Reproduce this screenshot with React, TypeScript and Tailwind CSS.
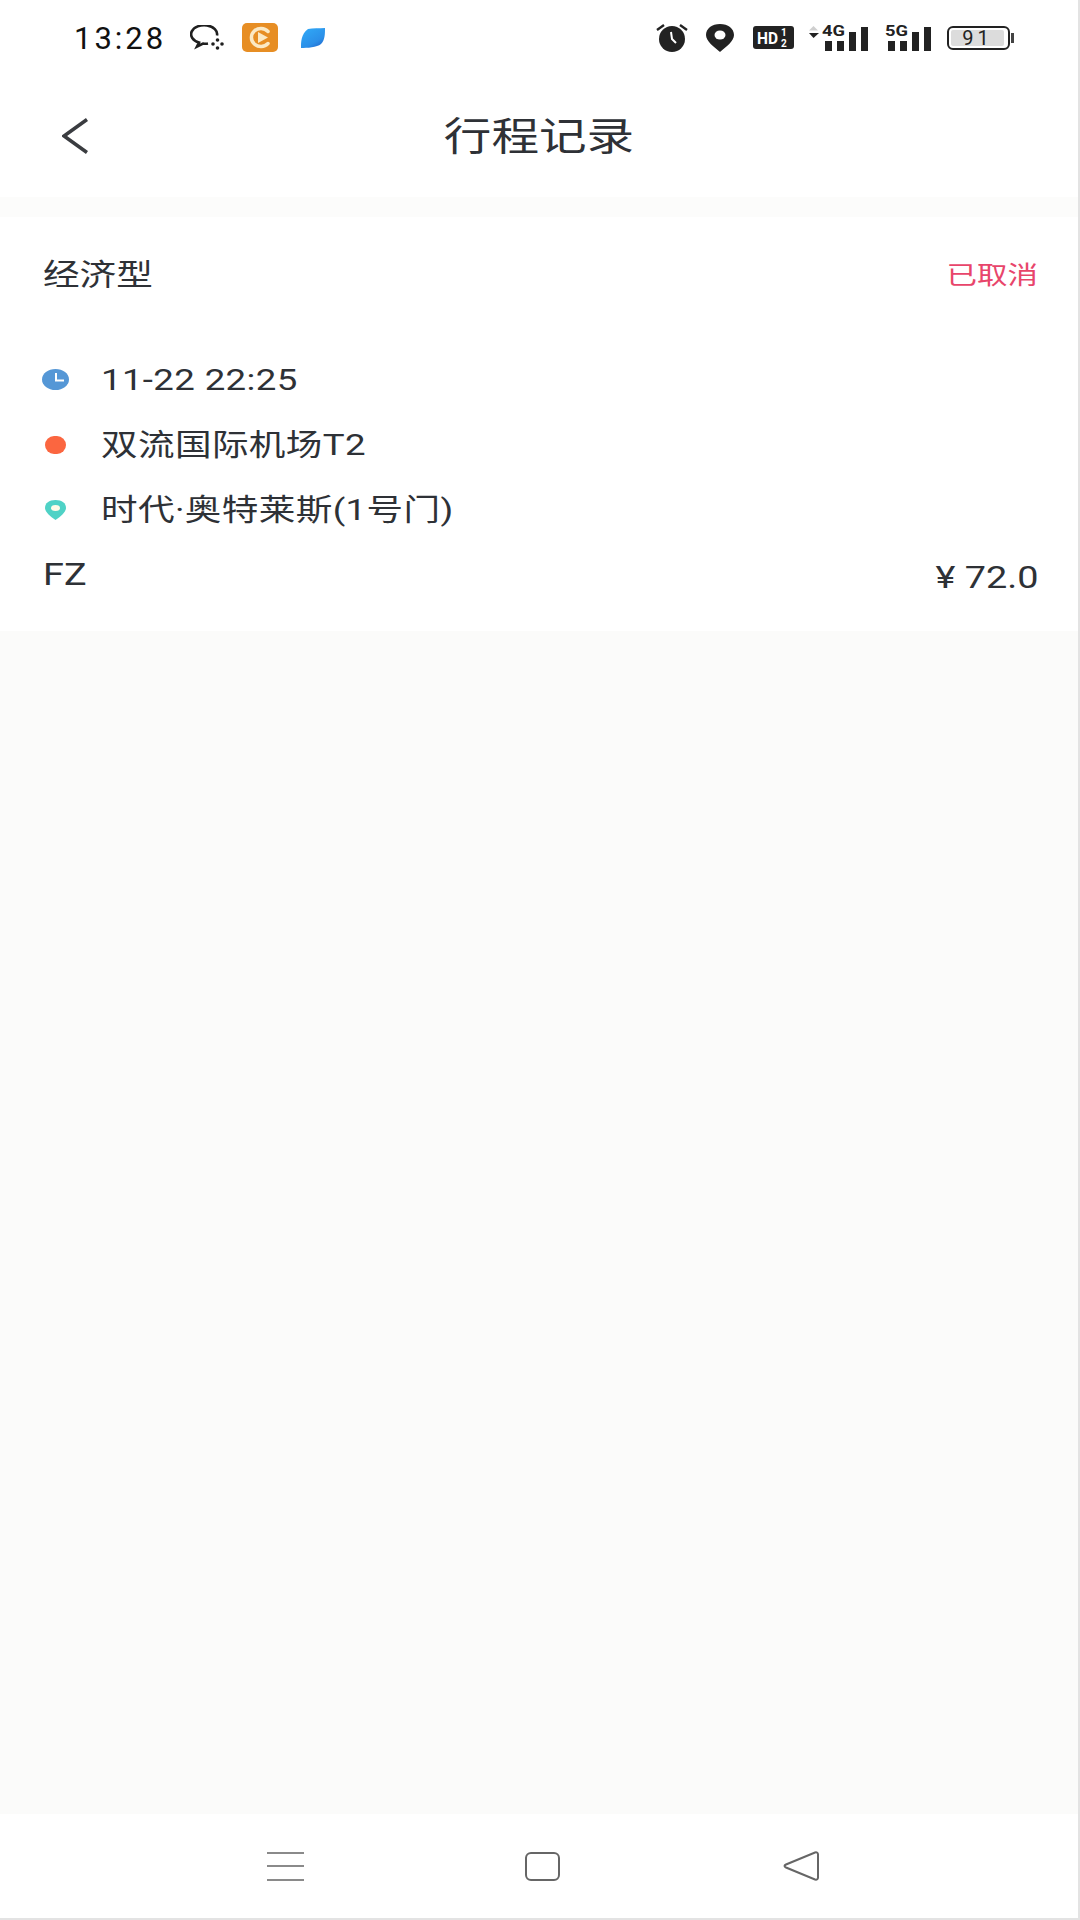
const cjk = "font-['Roboto','Noto_Sans_CJK_SC',sans-serif]";

// the screenshot is stretched sideways, so text is widened to follow it
function Wide({ children, className = '' }: { children: React.ReactNode; className?: string }) {
  return <span className={`inline-block scale-x-[1.22] whitespace-nowrap ${className}`}>{children}</span>;
}

function Bars({ label }: { label: string }) {
  return (
    <svg width="47" height="30" viewBox="0 -2 47 30" className="mb-[2px] shrink-0">
      <text x="0" y="12" fontSize="15" fontWeight="700" fontFamily="Roboto, sans-serif" fill="#222" textLength="23" lengthAdjust="spacingAndGlyphs">{label}</text>
      <rect x="3" y="17" width="7" height="10" fill="#222" />
      <rect x="15" y="17" width="7" height="10" fill="#222" />
      <rect x="27" y="8" width="7" height="19" fill="#222" />
      <rect x="39" y="3" width="7" height="24" fill="#222" />
    </svg>
  );
}

function StatusBar() {
  return (
    <div className="flex h-[75px] items-center justify-between pr-[68px] pl-[74px]">
      <div className="flex items-center">
        <span className="mt-[2px] w-[116px] font-['Roboto',sans-serif] text-[31px] leading-none tracking-[3px] text-[#111]">13:28</span>
        {/* work chat */}
        <svg width="36" height="26" viewBox="0 0 36 26" fill="none" stroke="#1f1f1f" strokeWidth="2.6">
          <path d="M27 10.500A13 9 0 1 0 9 17.500L7 21.500l6-3c2 .3 3.500.3 5 0" />
          <circle cx="23" cy="19" r="1.800" fill="#1f1f1f" stroke="none" />
          <circle cx="27.500" cy="15" r="1.800" fill="#1f1f1f" stroke="none" />
          <circle cx="32" cy="19" r="1.800" fill="#1f1f1f" stroke="none" />
          <circle cx="27.500" cy="23" r="1.800" fill="#1f1f1f" stroke="none" />
        </svg>
        <svg width="36" height="29" viewBox="0 0 36 29" className="ml-[16px]">
          <rect width="36" height="29" rx="5" fill="#e78e24" />
          <path d="M26 8.500A9.500 9 0 1 0 26 20.500" fill="none" stroke="#fbe9c4" strokeWidth="3.500" strokeLinecap="round" />
          <path d="M16 9l10 5.500-10 5.500z" fill="#fbe9c4" />
        </svg>
        <svg width="24" height="20" viewBox="0 0 24 20" className="ml-[23px]">
          <defs>
            <linearGradient id="leaf" x1="0.300" y1="0" x2="1" y2="1">
              <stop offset="0" stopColor="#30a6f5" />
              <stop offset="0.600" stopColor="#2b8fe8" />
              <stop offset="1" stopColor="#1c5cc4" />
            </linearGradient>
          </defs>
          <path d="M7 1C12 0 18 .5 24 0 24 6 24 12 20 16 16 19.500 6 20 0 20 0 14 0 6 7 1Z" fill="url(#leaf)" />
        </svg>
      </div>
      <div className="flex items-center">
        <svg width="32" height="29" viewBox="0 0 32 29">
          <circle cx="16" cy="16" r="13" fill="#222" />
          <path d="M1 7l7-5M31 7l-7-5" stroke="#222" strokeWidth="2.400" />
          <path d="M15 9l1 7 4 4" fill="none" stroke="#fff" strokeWidth="2" />
        </svg>
        <svg width="28" height="28" viewBox="0 0 28 28" className="ml-[18px]">
          <path d="M14 0C22 0 28 4.500 28 11 28 17 20 23 14 28 8 23 0 17 0 11 0 4.500 6 0 14 0Z" fill="#222" />
          <ellipse cx="14" cy="11" rx="5.500" ry="4.500" fill="#fff" />
        </svg>
        <svg width="41" height="23" viewBox="0 0 41 23" className="ml-[19px]">
          <rect width="41" height="23" rx="3" fill="#222" />
          <text x="4" y="18" fontSize="16" fontWeight="700" fontFamily="Roboto, sans-serif" fill="#fff" textLength="21" lengthAdjust="spacingAndGlyphs">HD</text>
          <text x="28" y="10" fontSize="10" fontWeight="700" fontFamily="Roboto, sans-serif" fill="#fff">1</text>
          <text x="28" y="21" fontSize="10" fontWeight="700" fontFamily="Roboto, sans-serif" fill="#fff">2</text>
        </svg>
        <svg width="11" height="12" viewBox="0 0 11 12" className="mb-[12px] ml-[14px]">
          <path d="M5.500 0L10 4.500H1z" fill="#cfcfcf" />
          <path d="M1 7h10L5.500 12z" fill="#222" />
        </svg>
        <div className="ml-[3px]"><Bars label="4G" /></div>
        <div className="ml-[16px]"><Bars label="5G" /></div>
        <div className="relative ml-[15px] flex h-[24px] w-[63px] items-center rounded-[6px] border-2 border-[#222] p-[2px]">
          <div className="flex h-full w-[53px] items-center justify-center rounded-[2px] bg-[#dcdcdc] font-['Roboto',sans-serif] text-[20px] tracking-[4px] text-[#222]">91</div>
          <div className="absolute top-[5px] -right-[6px] h-[10px] w-[3px] bg-[#444]" />
        </div>
      </div>
    </div>
  );
}

function NavBar() {
  return (
    <div className="relative flex h-[122px] items-center justify-center pt-[2px]">
      <svg width="26" height="36" viewBox="0 0 26 36" fill="none" stroke="#3a3c40" strokeWidth="3.500" className="absolute top-[43px] left-[62px]">
        <path d="M25 1.500L2 18l23 16.500" />
      </svg>
      <Wide className="text-[39px] leading-none text-[#2e3136]">行程记录</Wide>
    </div>
  );
}

function TripRow({ icon, children }: { icon: React.ReactNode; children: React.ReactNode }) {
  return (
    <div className="flex h-[65px] items-center">
      <div className="flex w-[58px] shrink-0 items-center">{icon}</div>
      <Wide className="origin-left text-[30px] leading-none tracking-[0.3px] text-[#2e3136]">{children}</Wide>
    </div>
  );
}

function BottomBar() {
  return (
    <div className="flex h-[104px] items-center bg-white pl-[267px]">
      <div className="flex h-[29px] w-[37px] flex-col justify-between">
        <div className="h-[2px] bg-[#8a8a8a]" />
        <div className="h-[2px] bg-[#8a8a8a]" />
        <div className="h-[2px] bg-[#8a8a8a]" />
      </div>
      <div className="ml-[221px] h-[29px] w-[35px] rounded-[6px] border-2 border-[#666]" />
      <svg width="36" height="30" viewBox="0 0 36 30" fill="none" stroke="#666" strokeWidth="2" className="ml-[223px]">
        <path d="M32 1.500C34 1 35 2 35 3.500V26.500C35 28 34 29 32 28.500L3 16.500C1 15.500 1 14.500 3 13.500Z" />
      </svg>
    </div>
  );
}

export default function App() {
  return (
    <div className={`flex h-[1920px] w-[1080px] flex-col border-r-2 border-b-2 border-[#e3e3e3] bg-[#fbfbfa] ${cjk}`}>
      <div className="bg-white">
        <StatusBar />
        <NavBar />
      </div>
      <div className="h-[20px] bg-[#fcfcfb]" />

      <div className="bg-white pt-[28px] pr-[40px] pb-[24px] pl-[43px]">
        <div className="mb-[42px] flex h-[60px] items-center justify-between">
          <Wide className="origin-left text-[30px] leading-none text-[#2e3136]">经济型</Wide>
          <Wide className="origin-right text-[25px] leading-none text-[#e8456b]">已取消</Wide>
        </div>

        <TripRow
          icon={
            <svg width="27" height="21" viewBox="0 0 27 21" className="-ml-[1px]">
              <ellipse cx="13.500" cy="10.500" rx="13.500" ry="10.500" fill="#5597d6" />
              <path d="M14 4v7.500h8" fill="none" stroke="#fff" strokeWidth="2" />
            </svg>
          }
        >
          11-22 22:25
        </TripRow>
        <TripRow icon={<div className="ml-[2px] h-[18px] w-[21px] rounded-full bg-[#fb6640]" />}>双流国际机场T2</TripRow>
        <TripRow
          icon={
            <svg width="21" height="20" viewBox="0 0 21 20" className="ml-[2px]">
              <path d="M10.500 0C17 0 21 3 21 8 21 12 15 17 10.500 20 6 17 0 12 0 8 0 3 4 0 10.500 0Z" fill="#4fd2c6" />
              <ellipse cx="10.500" cy="8" rx="4.500" ry="3" fill="#fffbe8" />
            </svg>
          }
        >
          时代·奥特莱斯(1号门)
        </TripRow>
        <div className="flex h-[65px] items-center justify-between">
          <Wide className="origin-left text-[31px] leading-none text-[#2e3136]">FZ</Wide>
          <Wide className="mt-[6px] origin-right text-[31px] leading-none text-[#2e3136]">¥ 72.0</Wide>
        </div>
      </div>

      <div className="flex-1" />
      <BottomBar />
    </div>
  );
}
